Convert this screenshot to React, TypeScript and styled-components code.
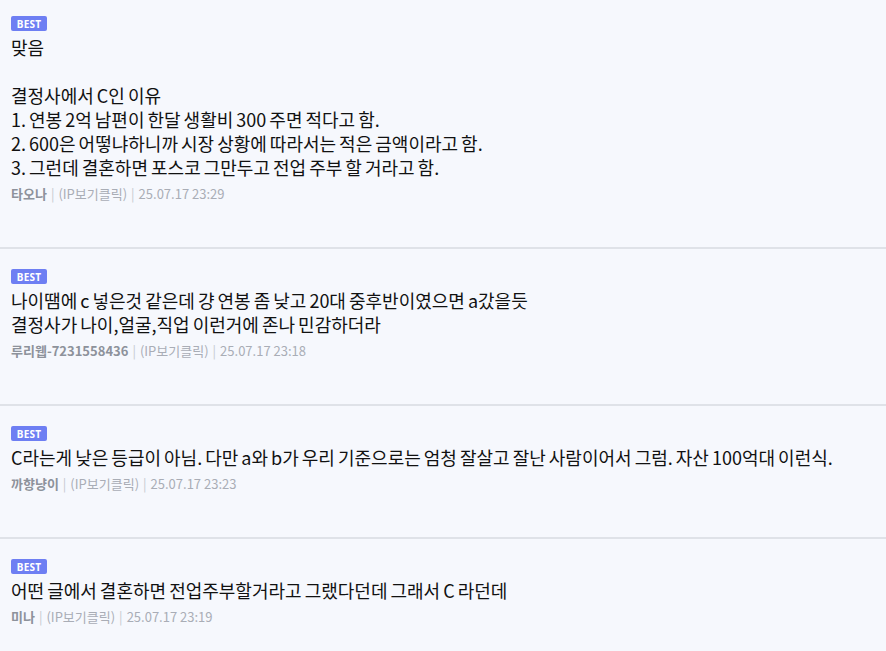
import React from "react";
import styled, { createGlobalStyle } from "styled-components";

const Global = createGlobalStyle`
  html, body { margin: 0; padding: 0; background: #f6f8fd; }
  body { font-family: "Noto Sans CJK KR", "Noto Sans", sans-serif; }
`;

const List = styled.div`
  display: flex;
  flex-direction: column;
  background: #f6f8fd;
  min-height: 651px;
`;

const Item = styled.div`
  display: flex;
  flex-direction: column;
  align-items: flex-start;
  padding: 20px 11px 44px;
  border-bottom: 2px solid #dfe2e8;
  &:first-child { padding-top: 16px; }
  &:last-child { border-bottom: none; }
`;

const Badge = styled.span`
  display: inline-flex;
  align-items: center;
  justify-content: center;
  width: 36px;
  height: 15px;
  border-radius: 2px;
  background: #6e7ff3;
  color: #fff;
  font-family: "Noto Sans", "Noto Sans CJK KR", sans-serif;
  font-size: 10px;
  font-weight: 700;
  letter-spacing: 0.2px;
`;

const Body = styled.div`
  margin-top: 4px;
  font-size: 18px;
  line-height: 24px;
  word-spacing: -1px;
  color: #111;
  white-space: pre-wrap;
`;

const Meta = styled.div`
  margin-top: 6px;
  font-size: 13px;
  line-height: 18px;
  color: #a9adb6;
  display: flex;
  gap: 4px;
`;

const Name = styled.span`
  font-weight: 700;
  color: #8d929b;
`;

const Pipe = styled.span`
  color: #c5c9d0;
`;

type Comment = { body: string; name: string; date: string };

const comments: Comment[] = [
  {
    body:
      "맞음\n\n결정사에서 C인 이유\n1. 연봉 2억 남편이 한달 생활비 300 주면 적다고 함.\n2. 600은 어떻냐하니까 시장 상황에 따라서는 적은 금액이라고 함.\n3. 그런데 결혼하면 포스코 그만두고 전업 주부 할 거라고 함.",
    name: "타오나",
    date: "25.07.17 23:29",
  },
  {
    body:
      "나이땜에 c 넣은것 같은데 걍 연봉 좀 낮고 20대 중후반이였으면 a갔을듯\n결정사가 나이,얼굴,직업 이런거에 존나 민감하더라",
    name: "루리웹-7231558436",
    date: "25.07.17 23:18",
  },
  {
    body:
      "C라는게 낮은 등급이 아님. 다만 a와 b가 우리 기준으로는 엄청 잘살고 잘난 사람이어서 그럼. 자산 100억대 이런식.",
    name: "까향냥이",
    date: "25.07.17 23:23",
  },
  {
    body: "어떤 글에서 결혼하면 전업주부할거라고 그랬다던데 그래서 C 라던데",
    name: "미나",
    date: "25.07.17 23:19",
  },
];

export default function App() {
  return (
    <>
      <Global />
      <List>
        {comments.map((c) => (
          <Item key={c.name}>
            <Badge>BEST</Badge>
            <Body>{c.body}</Body>
            <Meta>
              <Name>{c.name}</Name>
              <Pipe>|</Pipe>
              <span>(IP보기클릭)</span>
              <Pipe>|</Pipe>
              <span>{c.date}</span>
            </Meta>
          </Item>
        ))}
      </List>
    </>
  );
}
